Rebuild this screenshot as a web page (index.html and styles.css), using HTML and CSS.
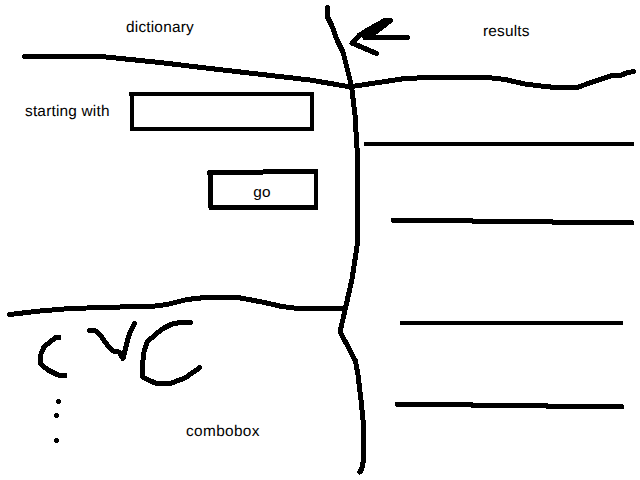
FILE: index.html
```html
<!DOCTYPE html>
<html lang="en">
<head>
<meta charset="utf-8">
<title>Dictionary</title>
<link rel="stylesheet" href="styles.css">
</head>
<body>
<main class="board">
  <section class="search">
    <h1 class="title">dictionary</h1>
    <form class="form">
      <label class="field"><span>starting with</span><input class="entry" type="text"></label>
      <button class="go" type="button">go</button>
    </form>
  </section>
  <section class="results">
    <h2 class="title">results</h2>
  </section>
  <section class="combo">
    <p class="caption">combobox</p>
  </section>
  <svg class="ink" viewBox="0 0 640 480" aria-hidden="true">
    <!-- pane dividers -->
    <path d="M24.5 56.5H101L160 62.5L210 68.5L310 80L345 86L352 86.5L405 78.5L430 77.5H488L505 79.5L525 84L545 86.5L556 87.5H577L594 81.5L612 75.5L622 75L626 73L633.5 71.5"/>
    <path d="M327.5 7.5V17L332 26L337 40L343 52L347 68L351.5 86L355 115L356.5 140L357.5 155V243L352 279L345.5 308L340 332L345 341L355.5 361L358 375L361 400L363.5 425V460L361.5 470L359.5 472"/>
    <path d="M9.5 314.5L40 311L70 308.5L120 307L155 306L167 304.5L187 299.5L205 297.5H238L262 302L282 306.5L298 308.5L333 309L344 308"/>
    <!-- arrow -->
    <path d="M376.5 53.5L352 43L359 35.5L366 31L382 22L385 20.5H390.5L381 28L370 36L365 37.5H407.5"/>
    <path class="fill" d="M359 35.5L366 31L385 20.5H390.5L381 28L370 36L365 37.5Z"/>
    <!-- button outline -->
    <path class="fill" d="M207 171L208 170H263V169H318V209L317 210H209V208H208V175H207Z M213 175V205H314V174H263V175Z"/>
    <path class="fill" d="M129 92H132V96H129Z"/>
    <!-- result rows -->
    <path class="fill" d="M364 142H634V146H364Z"/>
    <path class="fill" d="M391 218H473V219H553V220H633V221H634V225H552V224H472V223H392V222H391Z"/>
    <path class="fill" d="M400 321H623V325H400Z"/>
    <path class="fill" d="M395 402H473V403H548V404H623V405H624V409H546V408H471V407H396V406H395Z"/>
    <!-- sketched marks -->
    <path d="M59 337.5H56L51 341L44 347L41 354L40.5 364L48 370L58 375L65 375.5"/>
    <path d="M89.5 330.5H95L101 336L108 346L114 351.5L119 352L123 358.5L129 335L134.5 323.5"/>
    <path d="M190.5 322.5H180L172 324L164 328L156 334L147 342L144 352L142.5 364V377L155 383L170 383.5L185 378L200 367.5"/>
    <g class="dots"><circle cx="58.5" cy="401.5" r="2.5"/><circle cx="56.5" cy="415.5" r="2.5"/><circle cx="56.5" cy="440.5" r="2.5"/></g>
  </svg>
</main>
</body>
</html>
```
FILE: styles.css
```css
* { box-sizing: border-box; }

body {
  margin: 0;
  background: #fff;
  color: #000;
  font: 15.4px/18px "Liberation Sans", Arial, sans-serif;
  letter-spacing: 0.2px;
  text-rendering: geometricPrecision;
}

.board {
  position: relative;
  display: grid;
  grid-template: 310px 170px / 352px 288px;
  width: 640px;
  height: 480px;
  overflow: hidden;
}

.title, .caption {
  margin: 0;
  font: inherit;
}

.search { padding: 19px 0 0 25px; }
.search .title { padding-left: 101px; }

.results {
  grid-row: span 2;
  padding: 23px 0 0 131px;
}

.form {
  display: flex;
  flex-direction: column;
  align-items: flex-start;
  gap: 38px;
  margin-top: 55px;
}

.field {
  display: flex;
  align-items: center;
}
.field span { width: 105px; }

.entry {
  width: 184px;
  height: 39px;
  margin: 0;
  padding: 0 6px;
  border: 4px solid #000;
  background: #fff;
  font: inherit;
  border-radius: 0;
}

.go {
  width: 110px;
  height: 41px;
  margin-left: 182px;
  padding: 5px 0 0;
  border: 0;
  background: #fff;
  color: inherit;
  font: inherit;
  letter-spacing: inherit;
}

.combo { padding: 113px 0 0 186px; }
.caption { letter-spacing: 0.35px; }

/* hand-drawn strokes lie over the panes */
.ink {
  position: absolute;
  inset: 0;
  width: 640px;
  height: 480px;
  pointer-events: none;
  fill: none;
  stroke: #000;
  stroke-width: 5;
  stroke-linecap: round;
  stroke-linejoin: round;
  shape-rendering: crispEdges;
}
.ink .fill, .ink .dots {
  fill: #000;
  fill-rule: evenodd;
  stroke: none;
}
```
